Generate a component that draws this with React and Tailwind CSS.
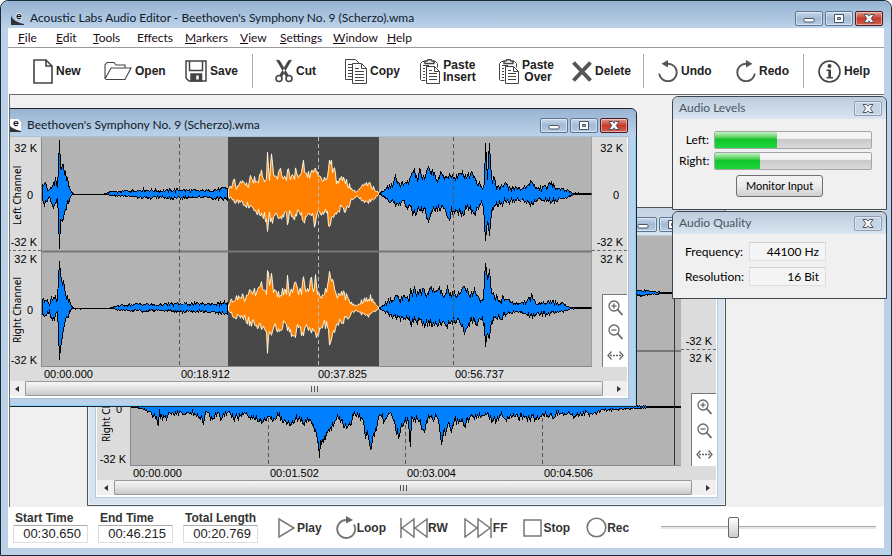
import React from "react";

const ui = "font-[Lato,'Open_Sans',sans-serif]";
const arial = "font-['Liberation_Sans',Arial,sans-serif]";

/* ---------- waveform data: [x, amplitude] pairs ---------- */

const L_HEAD_TOP = [42,8,43,12,45,9,47,5,49,3,51,6,53,11,55,13,57,8,58,26,59,53,60,27,61,26,63,25,64,22,65,21,67,13,69,6,71,2,73,0,104,0,110,2,118,2,126,3,130,3,143,4,160,3,175,4,200,3,215,4,222,5,228,6];
const L_HEAD_BOT = [42,5,44,9,46,8,49,2,51,7,53,11,55,10,57,4,58,28,59,52,60,28,61,25,63,22,66,12,69,5,71,1,104,0,110,1,118,2,130,2,143,4,160,3,175,4,200,3,215,4,228,5];
const L_SEL_TOP = [228,4,232,8,234,13,236,7,242,12,248,9,250,19,252,12,256,15,260,16,261,27,263,16,266,14,267,38,269,16,271,36,273,17,277,16,280,24,283,16,286,17,287,26,290,15,293,15,295,23,298,16,301,17,303,31,305,17,311,20,314,27,316,18,319,19,322,14,327,16,329,38,331,31,333,20,334,24,336,13,340,17,342,12,345,14,349,8,352,4,356,2,359,5,363,8,369,9,374,5,379,0];
const L_SEL_BOT = [228,3,235,7,242,8,250,12,256,16,262,20,266,25,267,39,269,22,271,27,275,19,281,22,285,17,287,27,290,17,294,25,298,18,304,26,308,17,312,20,314,31,316,20,321,18,327,18,328,32,330,31,332,22,336,16,340,14,345,14,347,16,350,6,356,2,362,6,368,7,374,4,379,0];
const L_TAIL_TOP = [379,0,384,4,390,8,395,14,398,10,405,9,408,11,411,20,414,22,417,14,419,22,422,17,425,14,427,24,431,24,434,20,437,14,440,18,445,16,449,20,453,16,458,17,464,20,468,17,471,24,474,16,478,11,482,7,484,12,485,47,487,18,489,51,490,28,492,14,494,18,496,8,502,8,506,9,510,5,515,6,522,5,527,9,530,13,533,8,537,5,543,6,548,8,552,9,556,7,562,5,568,3,572,1,592,0];
const L_TAIL_BOT = [379,0,384,3,392,8,397,11,403,9,410,14,413,20,417,16,424,17,427,24,430,25,433,16,440,13,446,18,448,23,449,29,451,17,455,19,462,18,468,14,473,17,476,17,481,7,483,12,485,43,487,26,489,41,491,22,494,9,500,11,505,7,510,8,516,5,522,7,530,10,535,6,540,5,550,7,556,6,565,4,572,1,592,0];

const R_HEAD_TOP = [42,8,43,11,45,6,47,7,49,4,51,10,53,12,55,11,57,8,58,26,59,43,60,34,61,26,63,27,64,17,66,12,69,6,71,2,73,0,110,0,116,2,126,3,140,4,155,3,175,4,200,4,215,4,228,5];
const R_HEAD_BOT = [42,4,44,7,47,5,49,4,51,11,53,12,55,9,57,4,58,26,59,48,60,35,61,34,63,17,66,12,69,5,71,1,110,0,118,2,140,3,160,2,185,4,200,3,228,5];
const R_SEL_TOP = [228,3,232,8,236,9,242,12,245,8,250,16,256,15,261,22,263,16,266,17,267,42,269,20,271,32,273,18,277,14,283,16,286,17,287,34,289,16,293,16,295,26,298,16,301,17,303,27,305,16,308,17,311,28,313,20,315,31,317,16,322,14,327,18,329,39,331,28,334,20,337,14,341,16,345,12,349,7,352,4,356,2,359,5,363,8,369,11,374,5,379,0];
const R_SEL_BOT = [228,4,235,8,242,9,250,14,256,16,262,20,266,20,267,41,269,22,271,31,274,18,279,24,283,17,288,20,294,31,297,18,303,28,306,17,311,26,314,20,316,28,321,17,327,16,329,35,332,25,335,18,340,14,345,12,349,7,353,4,356,2,362,6,368,8,374,4,379,0];
const R_TAIL_TOP = [379,0,384,4,390,7,395,11,400,8,405,10,409,7,410,16,413,18,416,14,419,15,423,18,427,13,429,20,433,18,436,14,439,19,443,12,447,19,451,14,456,12,460,16,465,20,469,14,473,16,478,10,483,9,485,42,487,26,489,37,491,16,494,11,500,8,505,10,510,5,518,4,525,7,531,11,535,5,542,5,550,6,556,5,562,4,566,2,570,1,592,0];
const R_TAIL_BOT = [379,0,384,4,392,8,400,10,406,9,411,14,416,13,422,16,428,14,434,16,440,14,446,17,450,12,455,14,460,14,464,24,467,15,472,12,477,14,482,8,484,20,485,42,487,24,489,32,491,16,494,9,500,9,508,6,515,4,522,5,530,9,536,5,545,6,552,5,560,4,566,2,570,1,592,0];

const BACK_BOT = [130,0,140,1,148,5,155,10,158,18,159,2,160,10,163,12,170,7,180,6,190,6,198,8,203,14,205,6,208,6,212,15,215,7,218,7,222,13,225,7,228,7,235,11,240,8,245,8,252,10,260,13,262,18,264,10,270,12,278,10,285,12,290,15,295,11,303,16,308,11,312,15,315,24,317,30,319,50,320,34,323,32,328,27,330,20,335,12,337,8,341,16,346,21,350,16,354,6,358,11,362,9,365,32,367,26,370,40,374,27,377,17,380,9,383,12,388,8,392,8,396,24,398,28,401,20,405,12,408,17,410,43,411,10,416,13,418,18,420,16,424,26,428,8,433,12,438,9,441,34,443,24,445,26,448,16,451,22,455,14,460,15,465,16,470,10,480,9,486,8,490,11,497,13,500,8,506,13,512,9,520,10,530,11,540,12,545,7,552,9,557,6,562,7,568,6,574,10,580,7,588,6,596,6,602,3,615,3,625,2,640,1,684,0];
const BACK_TOP = [130,0,200,8,300,20,400,22,500,12,600,4,640,1,684,0];
const BACK_LEFT = [130,1,250,12,400,20,560,8,620,4,645,2,652,1,684,0];

/* Walks the envelope one pixel at a time and roughens it with repeatable noise. */
function trace(pairs, seed, mid, direction) {
  const points = [];
  for (let i = 0; i + 3 < pairs.length; i += 2) {
    const [x0, a0, x1, a1] = pairs.slice(i, i + 4);
    for (let x = x0; x < x1; x++) {
      const amp = a0 + ((a1 - a0) * (x - x0)) / (x1 - x0);
      const hash = Math.sin(x * 12.9898 + seed * 78.233) * 43758.5453;
      const noise = (hash - Math.floor(hash) - 0.5) * Math.min(amp * 0.8, 9);
      points.push([x + 0.5, mid + direction * Math.max(0, amp + noise)]);
    }
  }
  return points;
}

function Wave({ top, bottom, mid, seed, fill, stroke }) {
  const upper = trace(top, seed, mid, -1);
  const lower = trace(bottom, seed + 7, mid, 1).reverse();
  const points = [...upper, ...lower].map((p) => p[0] + "," + p[1].toFixed(1)).join(" ");
  return <polygon points={points} fill={fill} stroke={stroke} strokeWidth="1" />;
}

const BLUE = "#0080ff";

function FrontPlot() {
  const dash = { strokeDasharray: "4 3", strokeWidth: 1 };
  return (
    <svg viewBox="41 137 551 230" className="block h-[230px] w-[551px] shrink-0 bg-[#b3b3b3]" role="img" aria-label="Waveform of Beethoven's Symphony No. 9">
      <rect x="228" y="137" width="151" height="230" fill="#484848" />
      <path d="M41 251.5H592" stroke="#777" strokeWidth="2" />
      <g shapeRendering="crispEdges">
        <path d="M41 194.5H592M41 308.5H592" stroke="#000" />
        <Wave top={L_HEAD_TOP} bottom={L_HEAD_BOT} mid={194} seed={1} fill={BLUE} stroke="#000" />
        <Wave top={L_TAIL_TOP} bottom={L_TAIL_BOT} mid={194} seed={3} fill={BLUE} stroke="#000" />
        <Wave top={R_HEAD_TOP} bottom={R_HEAD_BOT} mid={308} seed={4} fill={BLUE} stroke="#000" />
        <Wave top={R_TAIL_TOP} bottom={R_TAIL_BOT} mid={308} seed={6} fill={BLUE} stroke="#000" />
      </g>
      <Wave top={L_SEL_TOP} bottom={L_SEL_BOT} mid={194} seed={2} fill="#ff8000" stroke="#fff8dc" />
      <Wave top={R_SEL_TOP} bottom={R_SEL_BOT} mid={308} seed={5} fill="#ff8000" stroke="#fff8dc" />
      <path d="M179.5 137V367M453.5 137V367" stroke="#555" {...dash} />
      <path d="M318.5 137V367" stroke="#bbb" {...dash} />
      <path d="M41.5 137V367M592 137V367M41 366.5H592" stroke="#8a8a8a" fill="none" />
    </svg>
  );
}

function BackPlot() {
  return (
    <svg viewBox="130 236 551 230" className="block h-[230px] w-[551px] shrink-0 bg-[#b3b3b3]" role="img" aria-label="Waveform">
      <path d="M130 351H681" stroke="#777" strokeWidth="2" />
      <path d="M268.5 236V466M405.5 236V466M542.5 236V466" stroke="#555" strokeDasharray="4 3" />
      <g shapeRendering="crispEdges">
        <Wave top={BACK_LEFT} bottom={BACK_LEFT} mid={293} seed={8} fill={BLUE} stroke="#000" />
        <Wave top={BACK_TOP} bottom={BACK_BOT} mid={407} seed={9} fill={BLUE} stroke="#000" />
        <path d="M674.5 236V466" stroke="#333" />
      </g>
      <path d="M130.5 236V466M130 465.5H681" stroke="#8a8a8a" />
    </svg>
  );
}

/* ---------- window chrome ---------- */

function ChromeButton({ kind, active = true }) {
  const red = kind === "close" && active;
  const tone = red
    ? "border-[#4d1a1f] bg-linear-to-b from-[#dc9a8e] via-[#c4392a] to-[#d0604e]"
    : active
      ? "border-[#5f7690] bg-linear-to-b from-[#c6d8eb] via-[#a3bad4] to-[#b6cde4]"
      : "border-[#8c9db2] bg-[#c4d4e5]";
  return (
    <button type="button" aria-label={kind} className={"flex h-[15px] w-7 items-center justify-center rounded-[2px] border shadow-[inset_0_0_0_1px_rgba(255,255,255,0.45)] " + tone}>
      <svg width="12" height="9" viewBox="0 0 12 9" fill="#fff" stroke="#4c5566" strokeWidth="1">
        {kind === "minimize" && <rect x="1" y="4.5" width="10" height="3.5" rx="1" />}
        {kind === "maximize" && <path fillRule="evenodd" d="M1.5.5h9v8h-9zM4.5 3.5h3v2h-3z" />}
        {kind === "close" && <path d="M1 .5h3.500L6 2.200 7.500.5H11L8.200 4.500 11 8.500H7.500L6 6.800 4.500 8.500H1l2.800-4z" />}
      </svg>
    </button>
  );
}

function ChromeButtons({ active }) {
  return (
    <div className="flex gap-[2px]">
      <ChromeButton kind="minimize" active={active} />
      <ChromeButton kind="maximize" active={active} />
      <ChromeButton kind="close" active={active} />
    </div>
  );
}

function AppIcon({ paper }) {
  return (
    <svg width="13" height="13" viewBox="0 0 13 13" className="shrink-0">
      {paper && <path d="M0 0h10l3 3v10H0z" fill="#fff" />}
      <path d="M0 3c1 4 4 7 13 9v1H0z" fill="#2e3238" />
      <circle cx="8" cy="4.500" r="3.500" fill={paper ? "#fff" : "#dfe8f2"} />
      <path d="M6 4.500h4C10 1.800 6 1.800 6 4.500s2.500 2.500 3.800 1.500" fill="none" stroke="#111" strokeWidth="1.100" />
    </svg>
  );
}

function Gutter({ side, children }) {
  const left = side === "left";
  return (
    <div className={"relative flex flex-col bg-[#dcdcdc] text-[11px] leading-3 text-black " + arial + (left ? " w-[33px] shrink-0" : " flex-1")}>
      {["Left Channel", "Right Channel"].map((name, i) => (
        <div key={name} className={"flex pr-1 pl-1 " + (i === 0 ? "h-[114px] border-b border-dashed border-[#666] pt-[5px] pb-[2px]" : "h-[116px] pt-[2px] pb-px")}>
          {left && <span className="flex w-[10px] shrink-0 rotate-180 items-center justify-center font-['Noto_Sans',sans-serif] text-[10px] leading-[10px] whitespace-nowrap [writing-mode:vertical-rl]">{name}</span>}
          <div className="flex min-w-0 flex-1 flex-col items-end justify-between whitespace-nowrap">
            <span>32 K</span>
            <span className="pr-1">0</span>
            {left || i === 0 ? <span>-32 K</span> : <span />}
          </div>
        </div>
      ))}
      {children}
    </div>
  );
}

function ZoomTools() {
  const glass = (
    <>
      <circle cx="7" cy="7" r="5" />
      <path d="M10.500 10.500l5 5.500" strokeWidth="1.800" />
      <path d="M4.500 7h5" />
    </>
  );
  const icon = { width: 17, height: 17, viewBox: "0 0 17 17", fill: "none", stroke: "#666", strokeWidth: 1.3 };
  return (
    <div className="absolute right-0 bottom-0 flex h-[73px] w-[25px] flex-col items-center justify-around border-t border-l border-[#777] bg-white">
      <button type="button" aria-label="Zoom in"><svg {...icon}>{glass}<path d="M7 4.500v5" /></svg></button>
      <button type="button" aria-label="Zoom out"><svg {...icon}>{glass}</svg></button>
      <button type="button" aria-label="Fit to window">
        <svg {...icon}><path d="M4.500 4.500L1 8.500l3.500 4M12.500 4.500L16 8.500l-3.500 4" /><path d="M3 8.500h11" strokeDasharray="2 1" /></svg>
      </button>
    </div>
  );
}

function Scrollbar() {
  return (
    <div className="flex h-[15px] items-stretch bg-[#f0eeee]">
      <button type="button" aria-label="Scroll left" className="flex w-[17px] items-center justify-center">
        <svg width="4" height="6" viewBox="0 0 4 6"><path d="M4 0v6L0 3z" fill="#333" /></svg>
      </button>
      <div className="flex flex-1 items-center justify-center gap-[2px] rounded-[1px] border border-[#999] bg-linear-to-b from-[#f6f6f6] via-[#e2e2e2] to-[#c9c9cb]">
        <i className="h-[6px] w-px bg-[#555]" />
        <i className="h-[6px] w-px bg-[#555]" />
        <i className="h-[6px] w-px bg-[#555]" />
      </div>
      <button type="button" aria-label="Scroll right" className="flex w-6 items-center justify-center pl-2">
        <svg width="4" height="6" viewBox="0 0 4 6"><path d="M0 0v6l4-3z" fill="#333" /></svg>
      </button>
    </div>
  );
}

function EditorWindow({ title, active, times, place, children }) {
  const frame = active
    ? "border-[#1c2430] bg-[#b9d1ea] shadow-[inset_0_0_0_1px_#7fd4f5]"
    : "border-[#4a525c] bg-[#d7e4f0] shadow-[inset_0_0_0_1px_#e9f1f8]";
  const bar = active ? "bg-linear-to-b from-[#98b4d2] to-[#bcd3ea]" : "bg-linear-to-b from-[#c3d2e2] to-[#d7e4f0]";
  return (
    <section className={"absolute w-[639px] rounded-t-md border " + frame + " " + place}>
      <header className={"flex h-7 items-center gap-[6px] rounded-t-md pt-1 pr-2 pl-[9px] text-[12px] text-[#111827] " + bar}>
        <AppIcon paper />
        <h2 className="flex-1 whitespace-nowrap">{title}</h2>
        <ChromeButtons active={active} />
      </header>
      <div className="mx-2 mb-2 border-x border-b-2 border-white bg-[#dcdcdc] outline-1 outline-[#8fa3b8]/40">
        <div className="flex">
          <Gutter side="left" />
          {children}
          <Gutter side="right"><ZoomTools /></Gutter>
        </div>
        <div className={"flex h-[14px] pl-[35px] text-[11px] leading-[14px] text-black " + arial}>
          {times.map((t) => <span key={t} className="w-[137px] pl-px">{t}</span>)}
        </div>
        <Scrollbar />
      </div>
    </section>
  );
}

/* ---------- floating panels ---------- */

function Panel({ title, children }) {
  return (
    <section className="w-[215px] rounded-t-md border border-[#3e4650] bg-[#f0f0f0]">
      <header className="flex h-[22px] items-center justify-between rounded-t-md bg-linear-to-b from-[#bccbdc] to-[#d9e5f1] pr-1 pl-[6px] text-[12px] text-[#4b5561]">
        <h2>{title}</h2>
        <ChromeButton kind="close" active={false} />
      </header>
      {children}
    </section>
  );
}

function Meter({ label, value }) {
  return (
    <div className="flex h-[18px] items-center gap-[5px]">
      <span className="w-[30px] text-right">{label}</span>
      <div role="meter" aria-label={label} aria-valuenow={value} className="h-[18px] flex-1 overflow-hidden rounded-[2px] border border-[#a5a5a5] bg-linear-to-b from-[#f4f4f4] from-40% via-[#c8c8c8] via-45% to-[#dadada]">
        <div className="h-full bg-linear-to-b from-[#c2f5c6] via-[#10c42c] via-45% to-[#1fd63c]" style={{ width: value + "%" }} />
      </div>
    </div>
  );
}

function Quality({ id, label, value }) {
  return (
    <div className="flex items-center justify-between">
      <label htmlFor={id}>{label}</label>
      <input id={id} readOnly value={value} className="h-[19px] w-[77px] border border-[#dedede] border-t-[#cfcfcf] bg-[#f4f4f4] px-[6px] text-right" />
    </div>
  );
}

/* ---------- toolbar ---------- */

const S = { fill: "none", stroke: "#444", strokeWidth: 1.3 };
const ICONS = {
  New: <svg width="20" height="25" viewBox="0 0 20 25" {...S} strokeWidth="1.600"><path d="M1 1h12l6 6v17H1zM13 1v6h6" /></svg>,
  Open: <svg width="28" height="20" viewBox="0 0 28 20" {...S} strokeWidth="1.100"><path d="M1 18V4l2-2.500h7L12 4h9v3M1 18L7 7h20l-6 11.500H1.500" /></svg>,
  Save: <svg width="22" height="22" viewBox="0 0 22 22" {...S} strokeWidth="1.500"><path d="M1 1h20v20H4l-3-3zM4.500 1v9.500h13V1" /><path d="M6 14h10.500v7H6z" fill="#444" /><path d="M12.500 15.500v4" stroke="#fff" strokeWidth="2.500" /></svg>,
  Cut: <svg width="18" height="24" viewBox="0 0 18 24" {...S}><path d="M1.500 1l3 .5 9 15-2.500 1zM16.500 1l-3 .5-9 15 2.500 1z" fill="#444" strokeWidth=".6" /><circle cx="4" cy="19.500" r="3" strokeWidth="1.600" /><circle cx="14" cy="19.500" r="3" strokeWidth="1.600" /></svg>,
  Copy: <svg width="22" height="25" viewBox="0 0 22 25" {...S} strokeWidth="1"><path d="M.5.5h10l4 4v16H.5z" /><path d="M3 5.500h6M3 8.500h4M3 11.500h4M3 14.500h4M3 17.500h4" /><path d="M7.500 4.500h9l5 5v15h-14z" fill="#fff" /><path d="M16.500 4.500v5h5M10 9.500h4M10 12.500h9M10 15.500h9M10 18.500h9M10 21.500h9" /></svg>,
  Paste: <svg width="20" height="25" viewBox="0 0 20 25" {...S} strokeWidth="1"><path d="M2.500 2.500h13l2 2v4M2.500 2.500l-2 2v16l1 1h4M3 6.500h6M3 9.500h2M3 12.500h2M3 15.500h2M3 18.500h2" /><path d="M5 4.500V2h2L8 .800h3L12 2h2v2.500z" fill="#fff" strokeWidth="1.400" /><path d="M6.500 7.500h8l5 5v12h-13z" fill="#fff" /><path d="M14.500 7.500v5h5M9 11.500h3M9 14.500h8M9 17.500h8M9 20.500h8" /></svg>,
  Delete: <svg width="20" height="21" viewBox="0 0 20 21" stroke="#555" strokeWidth="4"><path d="M1.500 1.500l17 18M18.500 1.500l-17 18" /></svg>,
  Undo: <svg width="20" height="22" viewBox="0 0 20 22" {...S} stroke="#555" strokeWidth="1.900"><path d="M1.200 13.500A8.800 8.800 0 1 0 10 3.700H8" /><path d="M10 0v7.500L3.500 3.700z" fill="#555" stroke="none" /></svg>,
  Redo: <svg width="20" height="22" viewBox="0 0 20 22" {...S} stroke="#555" strokeWidth="1.900"><path d="M18.800 13.500A8.800 8.800 0 1 1 10 3.700h2" /><path d="M10 0v7.500l6.500-3.800z" fill="#555" stroke="none" /></svg>,
  Help: <svg width="23" height="23" viewBox="0 0 23 23" {...S} strokeWidth="1.600"><circle cx="11.500" cy="11.500" r="10.500" /><circle cx="11.500" cy="6" r="2" fill="#444" stroke="none" /><path d="M8.500 9.500h4.500v7.500h2v1.500h-6.500v-1.500h1.800v-6H8.500z" fill="#444" stroke="none" /></svg>,
};

function Tool({ icon, lines }) {
  return (
    <button type="button" className="flex items-center gap-[3px] text-center text-[12px] leading-3 font-bold text-[#222]">
      {ICONS[icon]}
      <span>{lines.map((l) => <span key={l} className="block">{l}</span>)}</span>
    </button>
  );
}

const Divider = () => <span className="h-[34px] w-px bg-[#aaa]" />;

const MENUS = [["", "F", "ile"], ["", "E", "dit"], ["", "T", "ools"], ["Effects", "", ""], ["", "M", "arkers"], ["", "V", "iew"], ["", "S", "ettings"], ["", "W", "indow"], ["", "H", "elp"]];

/* ---------- bottom bar ---------- */

function TimeField({ id, label, value }) {
  return (
    <div className="flex w-[75px] flex-col">
      <label htmlFor={id} className="pl-[2px] text-[12px] leading-[13px] font-bold whitespace-nowrap text-[#333]">{label}</label>
      <input id={id} readOnly value={value} className="h-[18px] w-full border border-[#ddd] border-t-[#aaa] bg-white px-[6px] text-right text-[13px] text-[#222]" />
    </div>
  );
}

const T = { fill: "none", stroke: "#777", strokeWidth: 1.500 };
const TRANSPORT = [
  ["Play", "mr-[14px] gap-[2px]", <svg width="17" height="20" viewBox="0 0 17 20" {...T}><path d="M1 1l15 9-15 9z" /></svg>],
  ["Loop", "mr-[14px]", <svg width="21" height="23" viewBox="0 0 21 23" {...T} strokeWidth="1.900"><path d="M12 4H10A9 9 0 1 0 18 8.500" /><path d="M10 0v7.500l7-3.500z" fill="#666" stroke="none" /></svg>],
  ["RW", "mr-4", <svg width="28" height="20" viewBox="0 0 28 20" {...T}><path d="M1 0v20M14 1L2 10l12 9zM27 1L15 10l12 9z" /></svg>],
  ["FF", "mr-4 gap-px", <svg width="28" height="20" viewBox="0 0 28 20" {...T}><path d="M27 0v20M14 1l12 9-12 9zM1 1l12 9-12 9z" /></svg>],
  ["Stop", "mr-4 gap-px", <svg width="19" height="18" viewBox="0 0 19 18" {...T}><path d="M1 1h17v16H1z" /></svg>],
  ["Rec", "", <svg width="21" height="21" viewBox="0 0 21 21" {...T} strokeWidth="1.600"><circle cx="10.500" cy="10.500" r="9.300" /></svg>],
];

export default function App() {
  return (
    <div className={"flex h-screen w-full flex-col rounded-t-lg border border-[#1b2a38] bg-[#bad1e8] " + ui}>
      <header className="flex h-[27px] shrink-0 items-center gap-[6px] rounded-t-lg bg-linear-to-b from-[#97b3d2] to-[#bbd2e9] pt-[7px] pr-2 pl-[10px] text-[12px] text-[#0f1a2b]">
        <AppIcon />
        <h1 className="flex-1 whitespace-nowrap">Acoustic Labs Audio Editor - Beethoven&apos;s Symphony No. 9 (Scherzo).wma</h1>
        <ChromeButtons active />
      </header>

      <main className="mx-[7px] mb-[7px] flex min-h-0 flex-1 flex-col bg-white">
        <nav className="grid h-5 shrink-0 grid-cols-[38px_37px_44px_48px_55px_40px_53px_54px_auto] border-b border-[#999] pl-[10px] text-[12px] leading-4 text-[#1a0a14]">
          {MENUS.map(([lead, key, rest]) => (
            <button key={lead + key} type="button" className="text-left">{lead}<u>{key}</u>{rest}</button>
          ))}
        </nav>

        <div className={"grid h-[46px] shrink-0 grid-cols-[71fr_81fr_67fr_23fr_70fr_75fr_79fr_73fr_71fr_15fr_78fr_67fr_15fr_66fr] items-center pl-[25px] " + arial}>
          <Tool icon="New" lines={["New"]} />
          <Tool icon="Open" lines={["Open"]} />
          <Tool icon="Save" lines={["Save"]} />
          <Divider />
          <Tool icon="Cut" lines={["Cut"]} />
          <Tool icon="Copy" lines={["Copy"]} />
          <Tool icon="Paste" lines={["Paste", "Insert"]} />
          <Tool icon="Paste" lines={["Paste", "Over"]} />
          <Tool icon="Delete" lines={["Delete"]} />
          <Divider />
          <Tool icon="Undo" lines={["Undo"]} />
          <Tool icon="Redo" lines={["Redo"]} />
          <Divider />
          <Tool icon="Help" lines={["Help"]} />
        </div>

        <div className="relative flex min-h-0 flex-1">
          <div className="relative ml-px flex-1 overflow-hidden border-t border-l border-[#6c6c6c] bg-[#f0f0f0]">
            <EditorWindow title="Recording.wma" place="top-[112px] left-[77px]" times={["00:00.000", "00:01.502", "00:03.004", "00:04.506"]}>
              <BackPlot />
            </EditorWindow>
            <EditorWindow active title="Beethoven's Symphony No. 9 (Scherzo).wma" place="top-[13px] left-[-12px]" times={["00:00.000", "00:18.912", "00:37.825", "00:56.737"]}>
              <FrontPlot />
            </EditorWindow>
          </div>
          <div className="absolute top-[2px] right-[-3px] flex flex-col gap-px text-[12px] text-black">
            <Panel title="Audio Levels">
              <div className="flex flex-col gap-[3px] pt-3 pr-[14px] pb-3 pl-[6px]">
                <Meter label="Left:" value={40} />
                <Meter label="Right:" value={29} />
                <button type="button" className="mt-[2px] ml-[57px] h-[22px] w-[87px] rounded-[3px] border border-[#707070] bg-linear-to-b from-[#f3f3f3] via-[#ebebeb] to-[#cfcfcf] text-[11px] whitespace-nowrap">Monitor Input</button>
              </div>
            </Panel>
            <Panel title="Audio Quality">
              <div className="flex flex-col gap-[6px] pt-2 pr-[60px] pb-3 pl-3">
                <Quality id="frequency" label="Frequency:" value="44100 Hz" />
                <Quality id="resolution" label="Resolution:" value="16 Bit" />
              </div>
            </Panel>
          </div>
        </div>

        <footer className={"flex h-[41px] shrink-0 items-center pr-2 pl-[5px] " + arial}>
          <div className="mr-5 flex gap-[10px]">
            <TimeField id="start" label="Start Time" value="00:30.650" />
            <TimeField id="end" label="End Time" value="00:46.215" />
            <TimeField id="total" label="Total Length" value="00:20.769" />
          </div>
          {TRANSPORT.map(([name, cls, icon]) => (
            <button key={name} type="button" className={"flex h-6 shrink-0 items-center text-[12px] font-bold text-[#333] " + cls}>{icon}{name}</button>
          ))}
          <input
            type="range"
            aria-label="Volume"
            defaultValue={33}
            className="ml-8 h-5 min-w-0 flex-1 appearance-none bg-transparent [&::-webkit-slider-runnable-track]:h-[3px] [&::-webkit-slider-runnable-track]:border-t [&::-webkit-slider-runnable-track]:border-[#aaa] [&::-webkit-slider-runnable-track]:bg-[#e6e6e6] [&::-webkit-slider-thumb]:-mt-[10px] [&::-webkit-slider-thumb]:h-[21px] [&::-webkit-slider-thumb]:w-[11px] [&::-webkit-slider-thumb]:appearance-none [&::-webkit-slider-thumb]:rounded-[2px] [&::-webkit-slider-thumb]:border [&::-webkit-slider-thumb]:border-[#666] [&::-webkit-slider-thumb]:bg-linear-to-b [&::-webkit-slider-thumb]:from-white [&::-webkit-slider-thumb]:to-[#ccc]"
          />
        </footer>
      </main>
    </div>
  );
}
